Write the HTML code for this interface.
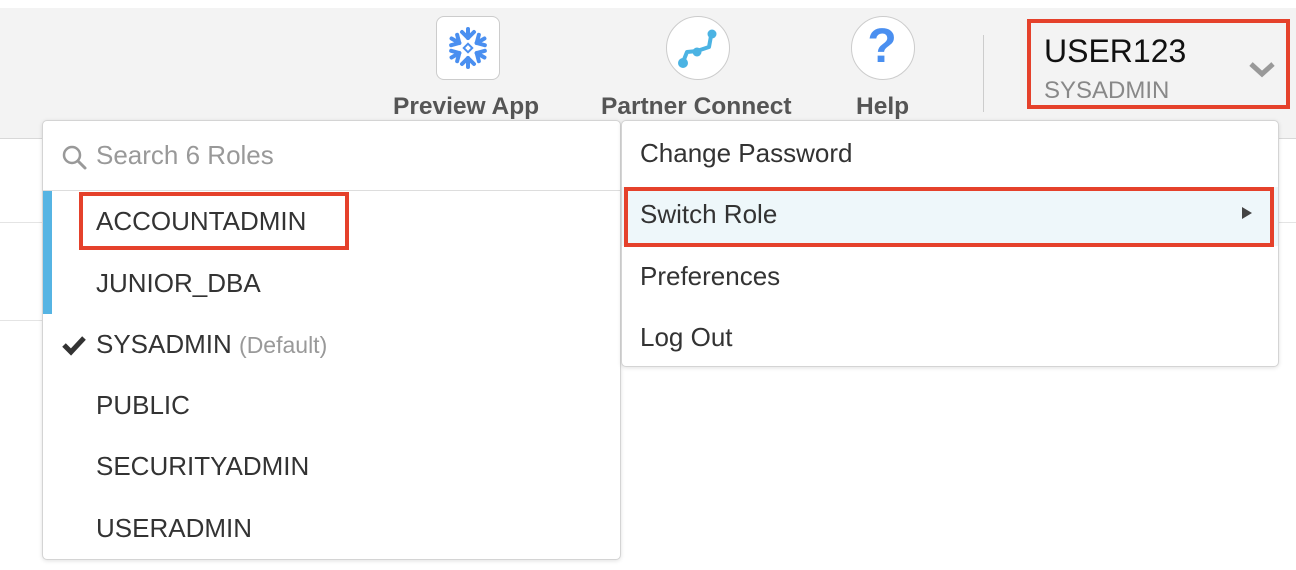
<!DOCTYPE html>
<html><head><style>
body{margin:0;width:1296px;height:570px;background:#fff;position:relative;overflow:hidden;font-family:"Liberation Sans",Arial,sans-serif;}
.a{position:absolute;}
.hdr{left:0;top:8px;width:1296px;height:130px;background:#f3f3f3;border-bottom:1px solid #d8d8d8;}
.lbl{font-weight:bold;font-size:24.5px;color:#555;top:93px;}
.panel{background:#fff;border:1px solid #d4d4d4;border-radius:5px;box-shadow:0 1px 4px rgba(0,0,0,0.12);}
.it{font-size:26px;color:#333;position:absolute;left:53px;line-height:30px;}
.mi{font-size:26px;color:#333;position:absolute;left:18px;line-height:30px;}
</style></head><body>
<div class="a hdr"></div>
<div class="a" style="left:0;top:222px;width:42px;height:1px;background:#e4e4e4"></div>
<div class="a" style="left:0;top:320px;width:42px;height:1px;background:#e4e4e4"></div>
<div class="a" style="left:1278px;top:222px;width:18px;height:1px;background:#e4e4e4"></div>

<div class="a" style="left:436px;top:16px;width:62px;height:62px;background:#fff;border:1px solid #ccc;border-radius:8px"></div>
<svg class="a" style="left:446px;top:26px" width="44" height="44" viewBox="-22 -22 44 44">
<defs><g id="arm" fill="none" stroke="#4a8ff0" stroke-width="4" stroke-linecap="round" stroke-linejoin="round"><path d="M0 -10 V-19"/><path d="M-6 -16 L0 -10 L6 -16"/></g></defs>
<use href="#arm" transform="rotate(0)"/><use href="#arm" transform="rotate(60)"/><use href="#arm" transform="rotate(120)"/><use href="#arm" transform="rotate(180)"/><use href="#arm" transform="rotate(240)"/><use href="#arm" transform="rotate(300)"/>
<rect x="-3" y="-3" width="6" height="6" transform="rotate(45)" fill="none" stroke="#4a8ff0" stroke-width="2"/>
</svg>
<div class="a lbl" style="left:393px">Preview App</div>

<div class="a" style="left:666px;top:16px;width:62px;height:62px;background:#fff;border:1px solid #ccc;border-radius:50%"></div>
<svg class="a" style="left:666px;top:16px" width="64" height="64">
<path d="M17 46 L21 36 L31 35 L43 31 L45 20" fill="none" stroke="#4bb3e3" stroke-width="4" stroke-linecap="round" stroke-linejoin="round"/>
<circle cx="17" cy="47" r="5" fill="#4bb3e3"/><circle cx="31" cy="36" r="4.5" fill="#4bb3e3"/><circle cx="46" cy="18" r="4.5" fill="#4bb3e3"/>
</svg>
<div class="a lbl" style="left:601px">Partner Connect</div>

<div class="a" style="left:851px;top:16px;width:62px;height:62px;background:#fff;border:1px solid #ccc;border-radius:50%"></div>
<div class="a" style="left:851px;top:19px;width:62px;text-align:center;font-size:48px;font-weight:bold;color:#4a8ff0;line-height:56px">?</div>
<div class="a lbl" style="left:856px">Help</div>

<div class="a" style="left:983px;top:35px;width:1px;height:77px;background:#ccc"></div>
<div class="a" style="left:1027px;top:19px;width:255px;height:82px;border:4px solid #e5412b"></div>
<div class="a" style="left:1044px;top:33px;font-size:32px;color:#111">USER123</div>
<div class="a" style="left:1044px;top:77px;font-size:24px;color:#888">SYSADMIN</div>
<svg class="a" style="left:1248px;top:61px" width="28" height="18"><path d="M3 3 L14 13 L25 3" fill="none" stroke="#999" stroke-width="5"/></svg>

<div class="a panel" style="left:42px;top:120px;width:577px;height:438px">
 <svg class="a" style="left:18px;top:23px" width="28" height="28"><circle cx="11" cy="11" r="8" fill="none" stroke="#999" stroke-width="2.5"/><path d="M17 17 L24 24" stroke="#999" stroke-width="3" stroke-linecap="round"/></svg>
 <div class="a" style="left:53px;top:19px;font-size:26px;color:#999">Search 6 Roles</div>
 <div class="a" style="left:0;top:69px;width:577px;height:1px;background:#ddd"></div>
 <div class="a" style="left:0;top:70px;width:9px;height:123px;background:#56b4e3"></div>
 <div class="a" style="left:36px;top:71px;width:262px;height:50px;border:4px solid #e5412b"></div>
 <div class="it" style="top:85px">ACCOUNTADMIN</div>
 <div class="it" style="top:147px">JUNIOR_DBA</div>
 <svg class="a" style="left:18px;top:213px" width="26" height="22"><path d="M3 11 L10 18 L23 4" fill="none" stroke="#333" stroke-width="5"/></svg>
 <div class="it" style="top:208px">SYSADMIN <span style="font-size:23px;color:#999">(Default)</span></div>
 <div class="it" style="top:269px">PUBLIC</div>
 <div class="it" style="top:330px">SECURITYADMIN</div>
 <div class="it" style="top:392px">USERADMIN</div>
</div>

<div class="a panel" style="left:621px;top:120px;width:656px;height:245px">
 <div class="mi" style="top:17px">Change Password</div>
 <div class="a" style="left:0;top:66px;width:656px;height:59px;background:#eef7fa"></div>
 <div class="a" style="left:2px;top:66px;width:642px;height:52px;border:4px solid #e5412b"></div>
 <div class="mi" style="top:78px">Switch Role</div>
 <div class="a" style="left:620px;top:86px;width:0;height:0;border-left:10px solid #444;border-top:6px solid transparent;border-bottom:6px solid transparent"></div>
 <div class="mi" style="top:140px">Preferences</div>
 <div class="mi" style="top:201px">Log Out</div>
</div>
</body></html>
